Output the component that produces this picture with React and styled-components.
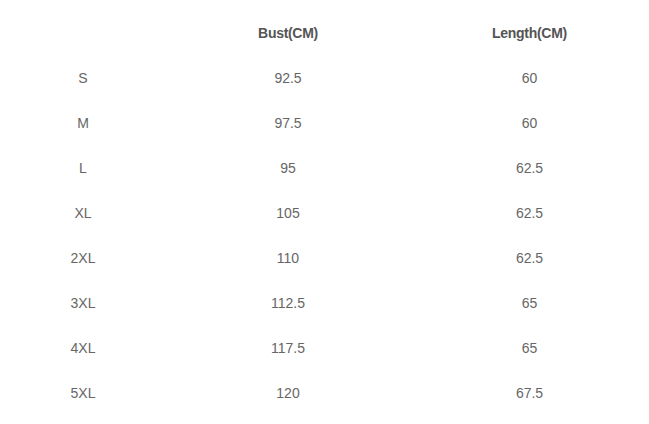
import React from "react";
import styled, { createGlobalStyle } from "styled-components";

const Global = createGlobalStyle`
  html, body { margin: 0; padding: 0; background: #fff; }
  body { font-family: "Liberation Sans", Arial, sans-serif; }
`;

const Table = styled.div`
  display: grid;
  grid-template-columns: 166px 244px 239px;
  grid-auto-rows: 45px;
  padding-top: 10px;
  width: 649px;
`;

const Cell = styled.div`
  display: flex;
  align-items: center;
  justify-content: center;
  font-size: 14px;
  color: ${(p) => (p.$head ? "#555" : "#666")};
  font-weight: ${(p) => (p.$head ? 700 : 400)};
  letter-spacing: ${(p) => (p.$head ? "-0.3px" : "0")};
`;

const rows = [
  ["S", "92.5", "60"],
  ["M", "97.5", "60"],
  ["L", "95", "62.5"],
  ["XL", "105", "62.5"],
  ["2XL", "110", "62.5"],
  ["3XL", "112.5", "65"],
  ["4XL", "117.5", "65"],
  ["5XL", "120", "67.5"],
];

export default function App() {
  return (
    <>
      <Global />
      <Table>
        <Cell $head />
        <Cell $head>Bust(CM)</Cell>
        <Cell $head>Length(CM)</Cell>
        {rows.map((r) =>
          r.map((v, i) => <Cell key={r[0] + i}>{v}</Cell>)
        )}
      </Table>
    </>
  );
}
